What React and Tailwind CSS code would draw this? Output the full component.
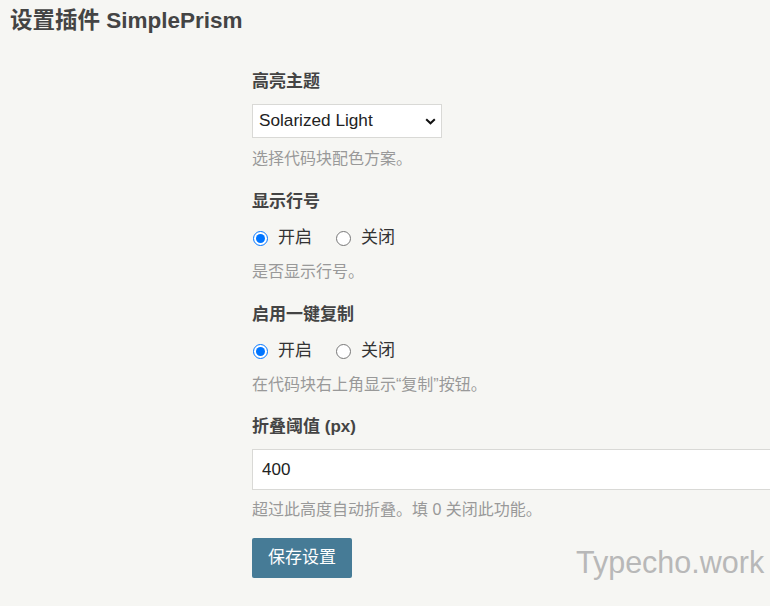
import React, { useState } from 'react';

const font = { fontFamily: '"Liberation Sans", "Noto Sans CJK SC", sans-serif' };

const RadioGroup = ({ name, value, onChange }) => (
  <div className="mt-[12px] flex items-center h-[24px] text-[17px] text-[#333]">
    <label className="flex items-center mr-[24px]">
      <input
        type="radio"
        name={name}
        checked={value === 1}
        onChange={() => onChange(1)}
        className="m-0 ml-[1px] mr-[10px] w-[15px] h-[15px] accent-[#0075ff]"
      />
      开启
    </label>
    <label className="flex items-center">
      <input
        type="radio"
        name={name}
        checked={value === 0}
        onChange={() => onChange(0)}
        className="m-0 mr-[10px] w-[15px] h-[15px] accent-[#0075ff]"
      />
      关闭
    </label>
  </div>
);

const App = () => {
  const [theme, setTheme] = useState('solarized-light');
  const [lineNo, setLineNo] = useState(1);
  const [copy, setCopy] = useState(1);
  const [fold, setFold] = useState('400');

  return (
    <div className="relative min-h-screen overflow-hidden bg-[#f6f6f3] text-[#444]" style={font}>
      {/* Header */}
      <h2 className="pt-[6px] pl-[10px] text-[22.5px] font-bold leading-[30px] text-[#444]">
        设置插件 SimplePrism
      </h2>

      {/* Options */}
      <form className="pl-[252px] pt-[34px] pb-[28px]" onSubmit={(e) => e.preventDefault()}>
        <div>
          <div className="text-[17px] font-bold leading-[24px]">高亮主题</div>
          <div className="relative mt-[10px] w-[190px] h-[34px]">
            <select
              value={theme}
              onChange={(e) => setTheme(e.target.value)}
              className="appearance-none w-full h-full pl-[6px] pr-[24px] bg-white border border-[#d9d9d6] text-[17.2px] text-[#222] outline-none"
              style={font}
            >
              <option value="default">Default</option>
              <option value="okaidia">Okaidia</option>
              <option value="solarized-light">Solarized Light</option>
              <option value="tomorrow">Tomorrow Night</option>
            </select>
            <svg
              className="pointer-events-none absolute right-[6px] top-[14px]"
              width="11"
              height="7"
              viewBox="0 0 11 7"
              fill="none"
            >
              <path d="M1.2 1.2 5.5 5.3 9.8 1.2" stroke="#111" strokeWidth="2" />
            </svg>
          </div>
          <p className="mt-[10px] text-[16px] leading-[22px] text-[#999]">选择代码块配色方案。</p>
        </div>

        <div className="mt-[20px]">
          <div className="text-[17px] font-bold leading-[24px]">显示行号</div>
          <RadioGroup name="lineNo" value={lineNo} onChange={setLineNo} />
          <p className="mt-[11px] text-[16px] leading-[22px] text-[#999]">是否显示行号。</p>
        </div>

        <div className="mt-[20px]">
          <div className="text-[17px] font-bold leading-[24px]">启用一键复制</div>
          <RadioGroup name="copy" value={copy} onChange={setCopy} />
          <p className="mt-[11px] text-[16px] leading-[22px] text-[#999]">在代码块右上角显示“复制”按钮。</p>
        </div>

        <div className="mt-[19px]">
          <div className="text-[17px] font-bold leading-[24px]">折叠阈值 (px)</div>
          <input
            type="text"
            value={fold}
            onChange={(e) => setFold(e.target.value)}
            className="block mt-[10px] w-[560px] h-[41px] px-[9px] bg-white border border-[#d9d9d6] text-[17px] text-[#222] outline-none"
            style={font}
          />
          <p className="mt-[9px] text-[16px] leading-[22px] text-[#999]">超过此高度自动折叠。填 0 关闭此功能。</p>
        </div>

        <button
          type="submit"
          className="mt-[17px] w-[100px] h-[40px] rounded-[2px] bg-[#467b96] text-[17px] text-white"
        >
          保存设置
        </button>
      </form>

      {/* Watermark */}
      <div className="absolute left-[576px] top-[547px] text-[30.5px] leading-none text-[#b8b8b8] whitespace-nowrap">
        Typecho.work
      </div>
    </div>
  );
};

export default App;
